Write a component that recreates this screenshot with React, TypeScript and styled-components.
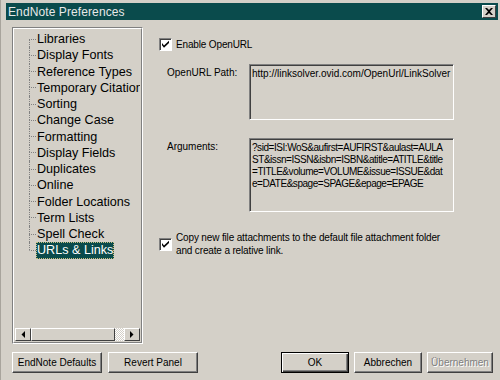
import styled, { createGlobalStyle } from "styled-components";

const GlobalStyle = createGlobalStyle`
  html, body {
    margin: 0;
    padding: 0;
    background: #d4d0c8;
  }
  body {
    font-family: "Liberation Sans", Arial, sans-serif;
    font-size: 10px;
    color: #000;
  }
`;

const teal = "#0a4b4c";

const treeItems = [
  "Libraries",
  "Display Fonts",
  "Reference Types",
  "Temporary Citations",
  "Sorting",
  "Change Case",
  "Formatting",
  "Display Fields",
  "Duplicates",
  "Online",
  "Folder Locations",
  "Term Lists",
  "Spell Check",
  "URLs & Links",
];

const argLines = [
  "?sid=ISI:WoS&aufirst=AUFIRST&aulast=AULA",
  "ST&issn=ISSN&isbn=ISBN&atitle=ATITLE&title",
  "=TITLE&volume=VOLUME&issue=ISSUE&dat",
  "e=DATE&spage=SPAGE&epage=EPAGE",
];

const Window = styled.div`
  width: 500px;
  height: 380px;
  box-sizing: border-box;
  padding: 3px 2px 0 5px;
  border-left: 1px solid #a8a49c;
  display: flex;
  flex-direction: column;
  background: #d4d0c8;
  overflow: hidden;
`;

const TitleBar = styled.div`
  height: 17px;
  flex-shrink: 0;
  background: ${teal};
  display: flex;
  align-items: center;
  justify-content: space-between;
  padding: 0 2px 0 2px;
`;

const Title = styled.span`
  color: #e8e8e8;
  font-size: 12px;
  letter-spacing: 0.1px;
`;

const CloseButton = styled.div`
  width: 14px;
  height: 13px;
  box-sizing: border-box;
  background: #d4d0c8;
  border: 1px solid;
  border-color: #fff #404040 #404040 #fff;
  display: flex;
  align-items: center;
  justify-content: center;
`;

const Body = styled.div`
  display: flex;
  margin-top: 7px;
  padding-left: 6px;
  height: 317px;
  flex-shrink: 0;
`;

const ListBox = styled.div`
  width: 131px;
  box-sizing: border-box;
  border: 1px solid;
  border-color: #808080 #fff #fff #808080;
  display: flex;
`;

const ListInner = styled.div`
  flex: 1;
  min-width: 0;
  border: 1px solid;
  border-color: #fff #808080 #808080 #fff;
  display: flex;
  flex-direction: column;
  padding: 1px;
`;

const Tree = styled.ul`
  list-style: none;
  margin: 0;
  padding: 1px 0 0 14px;
  flex: 1;
  overflow: hidden;
  font-size: 12.6px;
`;

const TreeRow = styled.li`
  display: flex;
  height: 16.25px;
  align-items: stretch;
  white-space: nowrap;
`;

const Branch = styled.div`
  width: 7px;
  display: flex;
  flex-direction: column;
  flex-shrink: 0;
`;

const BranchHalf = styled.div<{ $line: boolean; $top?: boolean }>`
  flex: 1;
  border-left: 1px dotted ${(p) => (p.$line ? "#808080" : "transparent")};
  border-top: ${(p) => (p.$top ? "1px dotted #808080" : "none")};
`;

const ItemLabel = styled.span<{ $selected: boolean }>`
  display: flex;
  align-items: center;
  padding: 0 1px;
  color: ${(p) => (p.$selected ? "#fff" : "#000")};
  background: ${(p) => (p.$selected ? teal : "transparent")};
  outline: ${(p) => (p.$selected ? "1px dotted #c8c080" : "none")};
  outline-offset: -1px;
`;

const HScroll = styled.div`
  height: 13px;
  display: flex;
  flex-shrink: 0;
`;

const ArrowButton = styled.div`
  width: 16px;
  box-sizing: border-box;
  border: 1px solid;
  border-color: #fff #404040 #404040 #fff;
  display: flex;
  align-items: center;
  justify-content: center;
  background: #d4d0c8;
`;

const Thumb = styled.div`
  width: 84px;
  box-sizing: border-box;
  border: 1px solid;
  border-color: #fff #404040 #404040 #fff;
  background: #d4d0c8;
`;

const Track = styled.div`
  flex: 1;
  background-color: #fff;
  background-image: repeating-conic-gradient(#d4d0c8 0 25%, #fff 0 50%);
  background-size: 2px 2px;
`;

const Panel = styled.div`
  flex: 1;
  padding: 11px 0 0 16px;
  display: flex;
  flex-direction: column;
`;

const CheckRow = styled.label<{ $gap?: number }>`
  display: flex;
  align-items: center;
  gap: 4px;
  margin-top: ${(p) => p.$gap ?? 0}px;
`;

const CheckBox = styled.span`
  width: 13px;
  height: 13px;
  box-sizing: border-box;
  border: 1px solid;
  border-color: #808080 #fff #fff #808080;
  box-shadow: inset 1px 1px 0 #404040;
  background: #fff;
  display: flex;
  align-items: center;
  justify-content: center;
  flex-shrink: 0;
`;

const CheckText = styled.span`
  line-height: 13px;
  letter-spacing: -0.15px;
`;

const FieldGrid = styled.div`
  display: grid;
  grid-template-columns: 82px 205px;
  row-gap: 18px;
  margin: 13px 0 0 8px;
`;

const FieldLabel = styled.div<{ $offset: number }>`
  padding-top: ${(p) => p.$offset}px;
`;

const TextArea = styled.div<{ $h: number; $tight?: boolean }>`
  height: ${(p) => p.$h}px;
  box-sizing: border-box;
  border: 1px solid;
  border-color: #808080 #fff #fff #808080;
  box-shadow: inset 1px 1px 0 #404040, inset -1px -1px 0 #d4d0c8;
  background: #d4d0c8;
  padding: 3px 2px;
  line-height: 12px;
  letter-spacing: ${(p) => (p.$tight ? "-0.45px" : "0")};
  white-space: nowrap;
  overflow: hidden;
`;

const Footer = styled.div`
  display: flex;
  gap: 6px;
  margin-top: 8px;
  padding-left: 6px;
`;

const Spacer = styled.div`
  flex: 1;
`;

const RightButtons = styled.div`
  display: flex;
  gap: 5px;
  margin-right: 5px;
`;

const Button = styled.button<{ $w: number; $default?: boolean }>`
  width: ${(p) => p.$w}px;
  height: 21px;
  box-sizing: border-box;
  font-family: "Liberation Sans", Arial, sans-serif;
  font-size: 10px;
  color: #000;
  background: #d4d0c8;
  border: 1px solid;
  border-color: ${(p) => (p.$default ? "#000" : "#fff #404040 #404040 #fff")};
  box-shadow: ${(p) =>
    p.$default
      ? "inset 1px 1px 0 #fff, inset -1px -1px 0 #404040, inset -2px -2px 0 #808080"
      : "inset -1px -1px 0 #808080"};
  padding: 0;
  &:disabled {
    color: #808080;
    text-shadow: 1px 1px 0 #fff;
  }
`;

function Check() {
  return (
    <CheckBox>
      <svg width="9" height="9" viewBox="0 0 9 9">
        <path d="M1 3 L3 5.5 L8 0.8 V3 L3 7.8 L1 5.3 Z" fill="#000" />
      </svg>
    </CheckBox>
  );
}

function TreeItem({ name, index }: { name: string; index: number }) {
  const first = index === 0;
  const last = index === treeItems.length - 1;
  return (
    <TreeRow>
      <Branch>
        <BranchHalf $line={!first} />
        <BranchHalf $line={!last} $top />
      </Branch>
      <ItemLabel $selected={last}>{name}</ItemLabel>
    </TreeRow>
  );
}

export default function App() {
  return (
    <>
      <GlobalStyle />
      <Window>
        <TitleBar>
          <Title>EndNote Preferences</Title>
          <CloseButton>
            <svg width="8" height="7" viewBox="0 0 8 7">
              <path
                d="M0 0 H2 L4 2 L6 0 H8 L5 3.5 L8 7 H6 L4 5 L2 7 H0 L3 3.5 Z"
                fill="#000"
              />
            </svg>
          </CloseButton>
        </TitleBar>
        <Body>
          <ListBox>
            <ListInner>
              <Tree>
                {treeItems.map((name, i) => (
                  <TreeItem name={name} index={i} key={name} />
                ))}
              </Tree>
              <HScroll>
                <ArrowButton>
                  <svg width="4" height="7" viewBox="0 0 4 7">
                    <path d="M4 0 V7 L0.5 3.5 Z" fill="#000" />
                  </svg>
                </ArrowButton>
                <Thumb />
                <Track />
                <ArrowButton>
                  <svg width="4" height="7" viewBox="0 0 4 7">
                    <path d="M0 0 V7 L3.5 3.5 Z" fill="#000" />
                  </svg>
                </ArrowButton>
              </HScroll>
            </ListInner>
          </ListBox>
          <Panel>
            <CheckRow>
              <Check />
              <CheckText>Enable OpenURL</CheckText>
            </CheckRow>
            <FieldGrid>
              <FieldLabel $offset={3}>OpenURL Path:</FieldLabel>
              <TextArea $h={56}>
                http://linksolver.ovid.com/OpenUrl/LinkSolver
              </TextArea>
              <FieldLabel $offset={3}>Arguments:</FieldLabel>
              <TextArea $h={74} $tight>
                {argLines.map((line) => (
                  <div key={line}>{line}</div>
                ))}
              </TextArea>
            </FieldGrid>
            <CheckRow $gap={19}>
              <Check />
              <CheckText>
                Copy new file attachments to the default file attachment folder
                <br />
                and create a relative link.
              </CheckText>
            </CheckRow>
          </Panel>
        </Body>
        <Footer>
          <Button $w={90}>EndNote Defaults</Button>
          <Button $w={90}>Revert Panel</Button>
          <Spacer />
          <RightButtons>
            <Button $w={68} $default>
              OK
            </Button>
            <Button $w={68}>Abbrechen</Button>
            <Button $w={66} disabled>
              Übernehmen
            </Button>
          </RightButtons>
        </Footer>
      </Window>
    </>
  );
}
